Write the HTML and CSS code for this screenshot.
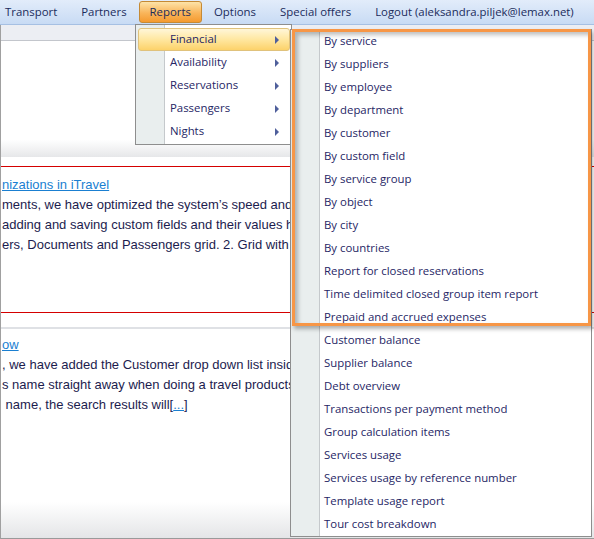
FILE: index.html
```html
<!DOCTYPE html>
<html lang="en">
<head>
    <meta charset="UTF-8">
    <title>Reports - Financial</title>
    <link rel="stylesheet" href="styles.css">
</head>
<body>

    <!-- top menu -->
    <div class="menubar">
        <span class="menu-item">Transport</span>
        <span class="menu-item">Partners</span>
        <span class="menu-item active">Reports</span>
        <span class="menu-item">Options</span>
        <span class="menu-item">Special offers</span>
        <span class="menu-item">Logout (aleksandra.piljek@lemax.net)</span>
    </div>

    <div class="page">
        <div class="toolbar"></div>
        <div class="panel"></div>

        <div class="news">
            <div class="news-item">
                <a class="news-link" href="#">nizations in iTravel</a>
                <p>ments, we have optimized the system’s speed and</p>
                <p>adding and saving custom fields and their values h</p>
                <p>ers, Documents and Passengers grid. 2. Grid with</p>
            </div>
            <div class="news-item second">
                <a class="news-link" href="#">ow</a>
                <p>, we have added the Customer drop down list insid</p>
                <p>s name straight away when doing a travel products</p>
                <p>&nbsp;name, the search results will[<a href="#">...</a>]</p>
            </div>
        </div>
        <div class="page-bottom"></div>
    </div>

    <!-- Reports dropdown -->
    <ul class="dropdown reports-menu">
        <li class="selected">Financial <span class="arrow"></span></li>
        <li>Availability <span class="arrow"></span></li>
        <li>Reservations <span class="arrow"></span></li>
        <li>Passengers <span class="arrow"></span></li>
        <li>Nights <span class="arrow"></span></li>
    </ul>

    <!-- Financial submenu -->
    <ul class="dropdown financial-menu">
        <li>By service</li>
        <li>By suppliers</li>
        <li>By employee</li>
        <li>By department</li>
        <li>By customer</li>
        <li>By custom field</li>
        <li>By service group</li>
        <li>By object</li>
        <li>By city</li>
        <li>By countries</li>
        <li>Report for closed reservations</li>
        <li>Time delimited closed group item report</li>
        <li>Prepaid and accrued expenses</li>
        <li>Customer balance</li>
        <li>Supplier balance</li>
        <li>Debt overview</li>
        <li>Transactions per payment method</li>
        <li>Group calculation items</li>
        <li>Services usage</li>
        <li>Services usage by reference number</li>
        <li>Template usage report</li>
        <li>Tour cost breakdown</li>
    </ul>

    <!-- highlight frame -->
    <div class="highlight"></div>

</body>
</html>
```

FILE: styles.css
```css
  body {
      margin: 0;
      width: 594px;
      height: 539px;
      overflow: hidden;
      position: relative;
      background-color: #fff;
      font-family: 'Open Sans', 'Noto Sans', sans-serif;
  }

  /* top menu */
  .menubar {
      display: flex;
      align-items: center;
      height: 24px;
      margin-left: -7px;
      background: linear-gradient(#e2ecfa, #c8dbf4);
      border-bottom: 1px solid #a6c0e3;
      white-space: nowrap;
  }
  .menu-item {
      font-size: 11.4px;
      color: #1b2c5c;
      padding: 0 11px;
      height: 20px;
      line-height: 19px;
      border: 1px solid transparent;
      border-radius: 3px;
  }
  .menu-item.active {
      background: linear-gradient(#fde3a8, #f9b55a 55%, #f59a2f);
      border-color: #c58a35;
      padding: 0 10px;
  }

  /* page under the menu */
  .page {
      height: 513px;
      border-left: 1px solid #a0a0a0;
      border-bottom: 1px solid #9a9a9a;
      display: flex;
      flex-direction: column;
  }
  .toolbar {
      height: 15px;
      background-color: #eceef3;
      border-bottom: 1px solid #c3c6cc;
  }
  .panel {
      height: 116px;
      background: linear-gradient(#fff 85%, #e6e7e9);
  }
  .news {
      flex: 1;
      padding-top: 9px;
      font-family: 'Liberation Sans', Arial, sans-serif;
      font-size: 13px;
      color: #1c1c4e;
  }
  .news-item {
      border-top: 1px solid #d40000;
      height: 137px;
      padding-top: 8px;
      padding-left: 1px;
      white-space: nowrap;
      overflow: hidden;
  }
  .news-item.second {
      height: auto;
      padding-top: 0;
  }
  .news-item.second::before {
      content: "";
      display: block;
      height: 14px;
      border-bottom: 2px solid #dfe1e5;
      margin-left: -1px;
      margin-bottom: 6px;
  }
  .news-link,
  .news a {
      color: #1a7fd1;
      text-decoration: underline;
  }
  .news-link {
      display: block;
      line-height: 20px;
  }
  .news p {
      margin: 0;
      line-height: 20px;
  }
  .page-bottom {
      height: 36px;
      background: linear-gradient(#fff, #e4e5e7);
  }

  /* dropdowns */
  .dropdown {
      position: absolute;
      margin: 0;
      list-style: none;
      background: linear-gradient(to right, #e9eeee 28px, #c5c9cc 28px, #c5c9cc 29px, #fff 29px);
      border: 1px solid #8e8e8e;
      font-size: 11.4px;
      color: #262665;
  }
  .dropdown li {
      position: relative;
      height: 23px;
      line-height: 22px;
      white-space: nowrap;
  }
  .reports-menu {
      left: 135px;
      top: 24px;
      width: 155px;
      padding: 3px 0 1px;
  }
  .reports-menu li {
      padding-left: 31px;
      margin: 0 1px 0 2px;
      border: 1px solid transparent;
      height: 21px;
      line-height: 20px;
  }
  .reports-menu li.selected {
      background: linear-gradient(#fff6d8, #ffe7a0 50%, #fcd26a);
      border-color: #e0c27c;
      border-radius: 3px;
  }
  .arrow {
      position: absolute;
      right: 10px;
      top: 7px;
      width: 0;
      height: 0;
      border-top: 4px solid transparent;
      border-bottom: 4px solid transparent;
      border-left: 4px solid #4f5f9b;
  }
  .financial-menu {
      left: 290px;
      top: 29px;
      width: 300px;
      padding: 0;
  }
  .financial-menu li {
      padding-left: 33px;
  }

  /* orange frame laid over the first items */
  .highlight {
      position: absolute;
      left: 292px;
      top: 29px;
      width: 293px;
      height: 291px;
      border: 3px solid #f79646;
      box-shadow: 2px 3px 4px rgba(0, 0, 0, 0.3), inset 3px 3px 4px rgba(0, 0, 0, 0.25);
  }
```
